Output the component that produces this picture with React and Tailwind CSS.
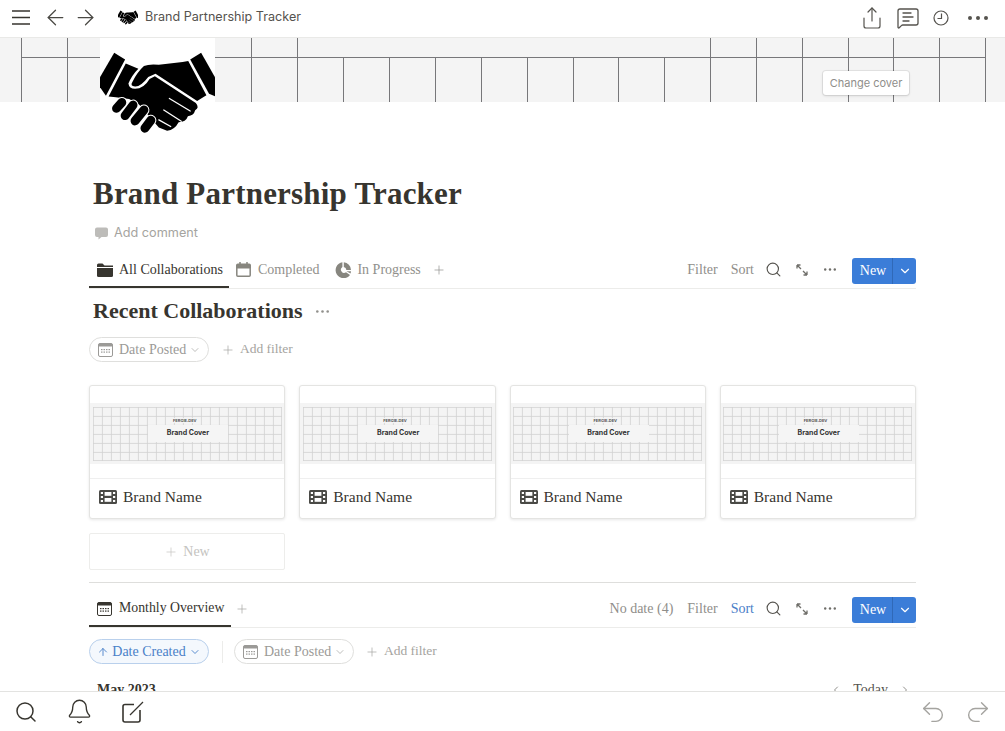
import React from "react";
import { ArrowLeft, ArrowRight, ChevronDown, ChevronLeft, ChevronRight, Plus, Search, Bell, Undo2, Redo2, ArrowUp, Share, MessageSquareText } from "lucide-react";

const serif = "font-['Liberation_Serif',serif]";

const Handshake = ({ className }) => (
  <svg viewBox="12 20 348 247" className={className}>
    <path d="M55 22 L88 42 L30 152 L12 126 L12 96 Z" fill="#000" />
    <path d="M318 22 L285 42 L342 146 L360 153 L360 96 Z" fill="#000" />
    <path d="M90 54 L128 70 Q108 90 98 115 Q100 131 118 131 Q145 130 162 101 L178 93 L302 174 Q314 188 300 196 Q296 212 278 214 Q272 232 250 232 Q238 255 215 258 L190 248 L130 178 L100 162 L60 156 L38 154 Z" fill="#000" />
    <path d="M110 110 Q125 80 145 62 Q160 55 190 58 L262 50 L279 47 L334 150 L306 168 L180 85 L158 95 Q135 125 118 124 Q102 122 110 110 Z" fill="#000" />
    <g stroke="#fff" strokeWidth="4" strokeLinecap="round">
      <path d="M222 160 L285 198" />
      <path d="M205 195 L258 229" />
      <path d="M190 225 L226 245" />
    </g>
    <g strokeLinecap="round" fill="none">
      <g stroke="#fff" strokeWidth="33">
        <path d="M62 190 L78 172" />
        <path d="M88 212 L112 180" />
        <path d="M118 228 L145 195" />
        <path d="M148 250 L166 226" />
      </g>
      <g stroke="#000" strokeWidth="27">
        <path d="M62 190 L78 172" />
        <path d="M88 212 L112 180" />
        <path d="M118 228 L145 195" />
        <path d="M148 250 L166 226" />
      </g>
    </g>
  </svg>
);

const Dots = ({ className }) => (
  <svg viewBox="0 0 20 4" className={className} fill="currentColor">
    <circle cx="2" cy="2" r="2" />
    <circle cx="10" cy="2" r="2" />
    <circle cx="18" cy="2" r="2" />
  </svg>
);

const Expand = ({ className }) => (
  <svg viewBox="0 0 14 14" className={className} fill="none" stroke="currentColor" strokeWidth="1.3">
    <path d="M2 2 L6 6 M2 2 V5.5 M2 2 H5.5 M12 12 L8 8 M12 12 V8.5 M12 12 H8.5" />
  </svg>
);

const Folder = () => (
  <svg viewBox="0 0 16 14" className="w-4 h-[14px]" fill="#37352f">
    <path d="M0 2 Q0 0.5 1.5 0.5 H5.5 L7.5 2.5 H16 V4 H0 Z" />
    <path d="M0 5 H16 V12.5 Q16 14 14.5 14 H1.5 Q0 14 0 12.5 Z" />
  </svg>
);

const CalendarFill = () => (
  <svg viewBox="0 0 15 15" className="w-[15px] h-[15px]" fill="none" stroke="#87867f">
    <rect x="0.8" y="2.2" width="13.4" height="12" rx="1" strokeWidth="1.5" />
    <path d="M0.8 3 H14.2 V6 H0.8 Z" fill="#87867f" />
    <path d="M4 0 V3 M11 0 V3" strokeWidth="1.5" />
  </svg>
);

const Pie = () => (
  <svg viewBox="0 0 16 16" className="w-4 h-4" fill="#87867f">
    <path d="M7.4 0.3 V5 A3.2 3.2 0 1 0 11 10.3 L15 13 A8 8 0 1 1 7.4 0.3 Z" />
    <path d="M8.8 0.3 A8 8 0 0 1 16 8 H11.4 A3.5 3.5 0 0 0 8.8 5 Z" />
    <path d="M11.5 9.2 H16 A8 8 0 0 1 15.5 11.6 Z" />
  </svg>
);

const CalendarSmall = ({ color = "#9b9a97", fill = "#fff" }) => (
  <svg viewBox="0 0 15 14" className="w-[15px] h-[14px] shrink-0">
    <rect x="0.5" y="0.5" width="14" height="13" rx="1.5" fill={fill} stroke={color} />
    <rect x="0.5" y="0.5" width="14" height="3" rx="1" fill={color} />
    <g fill={color}>
      <rect x="3" y="6" width="1.5" height="1.2" />
      <rect x="5.5" y="6" width="1.5" height="1.2" />
      <rect x="8" y="6" width="1.5" height="1.2" />
      <rect x="10.5" y="6" width="1.5" height="1.2" />
      <rect x="3" y="8.5" width="1.5" height="1.2" />
      <rect x="5.5" y="8.5" width="1.5" height="1.2" />
      <rect x="8" y="8.5" width="1.5" height="1.2" />
      <rect x="10.5" y="8.5" width="1.5" height="1.2" />
    </g>
  </svg>
);

const Film = () => (
  <svg viewBox="0 0 18 14" className="w-[18px] h-[14px] shrink-0">
    <rect width="18" height="14" rx="1.5" fill="#4a4a46" />
    <g fill="#fff">
      <rect x="1.8" y="2" width="2.2" height="2" />
      <rect x="1.8" y="6" width="2.2" height="2" />
      <rect x="1.8" y="10" width="2.2" height="2" />
      <rect x="14" y="2" width="2.2" height="2" />
      <rect x="14" y="6" width="2.2" height="2" />
      <rect x="14" y="10" width="2.2" height="2" />
      <rect x="5.6" y="2" width="6.8" height="3.8" />
      <rect x="5.6" y="8" width="6.8" height="3.8" />
    </g>
  </svg>
);

const CoverGrid = () => {
  const top = [21, 67, 251, 297, 710, 756, 802, 848, 893, 939, 985];
  const bottom = [21, 67, 251, 297, 343, 389, 435, 481, 527, 573, 618, 664, 710, 756, 802, 848, 893, 939, 985];
  return (
    <svg width="1005" height="64" className="block" stroke="#77777a" strokeWidth="1">
      {top.map((x) => (
        <line key={x} x1={x + 0.5} x2={x + 0.5} y1="0" y2="19" />
      ))}
      <line x1="21" x2="985" y1="19.5" y2="19.5" />
      {bottom.map((x) => (
        <line key={x} x1={x + 0.5} x2={x + 0.5} y1="19" y2="64" />
      ))}
    </svg>
  );
};

const ThumbGrid = () => {
  const cols = Array.from({ length: 22 }, (_, i) => i * 9);
  const rows = Array.from({ length: 7 }, (_, i) => i * 9);
  return (
    <svg viewBox="0 0 189 54" className="block w-[189px] h-[54px]" stroke="#d0d0d0" strokeWidth="0.8">
      {cols.map((x) => (
        <line key={x} x1={Math.min(x + 0.4, 188.6)} x2={Math.min(x + 0.4, 188.6)} y1="0" y2="54" />
      ))}
      {rows.map((y) => (
        <line key={y} y1={Math.min(y + 0.4, 53.6)} y2={Math.min(y + 0.4, 53.6)} x1="0" x2="189" />
      ))}
    </svg>
  );
};

const Card = () => (
  <div className="h-[134px] rounded-[3px] border border-[#e4e4e2] bg-white shadow-[0_1px_3px_rgba(15,15,15,0.1)] flex flex-col">
    <div className="h-[93px] shrink-0 pt-[17px] border-b border-[#efefef]">
      <div className="h-[61px] bg-[#f4f4f4] flex items-center justify-center relative">
        <ThumbGrid />
        <div className="absolute left-[58px] top-[22px] w-[80px] h-[17px] bg-[#f5f5f5] flex items-center justify-center font-['Inter',sans-serif] font-bold text-[7px] text-[#333]">
          Brand Cover
        </div>
        <div className="absolute left-[82px] top-[15px] px-px bg-[#f4f4f4] font-['Inter',sans-serif] font-bold text-[4px] leading-[5px] text-[#555]">
          FERGIE.DEV
        </div>
      </div>
    </div>
    <div className={`flex-1 flex items-center gap-[6px] pl-[9px] pb-[4px] text-[15.5px] text-[#37352f] ${serif}`}>
      <Film />
      <span>Brand Name</span>
    </div>
  </div>
);

const DbActions = ({ sortBlue, noDate }) => (
  <div className={`flex items-center text-[14px] text-[#8f8e8a] ${serif}`}>
    {noDate && <span className="mr-[14px]">No date (4)</span>}
    <span className="mr-[13px]">Filter</span>
    <span className={sortBlue ? "text-[#4a80c8]" : ""}>Sort</span>
    <Search className="w-[17px] h-[17px] ml-[11px] text-[#55534e]" strokeWidth={1.6} />
    <Expand className="w-[14px] h-[14px] ml-[13px] text-[#6f6e69]" />
    <Dots className="w-[12px] h-[3px] ml-[15px] text-[#6f6e69]" />
    <div className="ml-[16px] mt-[2px] w-[64px] h-[26px] rounded-[3px] bg-[#3b7dd8] flex text-white">
      <span className="w-[41px] pl-[2px] flex items-center justify-center border-r border-[#3069b8]">New</span>
      <span className="flex-1 flex items-center justify-center">
        <ChevronDown className="w-[14px] h-[14px]" strokeWidth={2} />
      </span>
    </div>
  </div>
);

const AddFilter = () => (
  <div className={`flex items-center gap-[5px] text-[13.5px] text-[#a5a4a0] ${serif}`}>
    <Plus className="w-[14px] h-[14px]" strokeWidth={1.2} />
    <span>Add filter</span>
  </div>
);

const DatePosted = () => (
  <div className={`h-[25px] w-[120px] pl-[8px] rounded-full border border-[#dfdfdd] flex items-center gap-[6px] text-[14px] text-[#9b9a97] whitespace-nowrap ${serif}`}>
    <CalendarSmall />
    <span className="flex items-center gap-[3px]">
      Date Posted
      <ChevronDown className="w-[12px] h-[12px]" strokeWidth={1.3} />
    </span>
  </div>
);

export default function App() {
  return (
    <div className="h-screen flex flex-col bg-white overflow-hidden text-[#37352f]">
      <header className="h-[38px] shrink-0 flex items-center pl-3 pr-[17px] pb-[2px] border-b border-[#e9e9e7]">
        <svg viewBox="0 0 18 15" className="w-[18px] h-[15px] text-[#37352f]" stroke="currentColor" strokeWidth="1.7">
          <path d="M0 1 H18 M0 7.5 H18 M0 14 H18" />
        </svg>
        <ArrowLeft className="w-[25px] h-[25px] ml-[13px] text-[#4a4944]" strokeWidth={1.2} />
        <ArrowRight className="w-[25px] h-[25px] ml-[5px] text-[#4a4944]" strokeWidth={1.2} />
        <Handshake className="w-[20px] h-[15px] ml-[20px]" />
        <span className="ml-[7px] font-['Inter',sans-serif] text-[12.6px] text-[#55534e]">Brand Partnership Tracker</span>
        <div className="ml-auto flex items-center text-[#55534e]">
          <Share className="w-[24px] h-[24px]" strokeWidth={1.2} />
          <MessageSquareText className="w-[24px] h-[24px] ml-[12px]" strokeWidth={1.3} />
          <svg viewBox="0 0 16 16" className="w-[16px] h-[16px] ml-[13px]" fill="none" stroke="currentColor" strokeWidth="1.2">
            <circle cx="8" cy="8" r="7" />
            <path d="M8.5 3.5 V8.5 H4.5" />
          </svg>
          <Dots className="w-[20px] h-[4px] ml-[19px]" />
        </div>
      </header>

      <main className="flex-1 min-h-0 overflow-hidden">
        <div className="relative h-[64px] bg-[#f4f4f4]">
          <CoverGrid />
          <div className="absolute left-[100px] top-0 w-[115px] h-[64px] bg-white" />
          <Handshake className="absolute left-[100px] top-[14px] w-[115px] h-[82px]" />
          <div className="absolute left-[823px] top-[33px] w-[86px] h-[24px] rounded-[3px] bg-white shadow-[0_0_0_1px_rgba(15,15,15,0.07),0_1px_3px_rgba(15,15,15,0.12)] flex items-center justify-center font-['Inter',sans-serif] text-[11px] text-[#8f8e8a]">
            Change cover
          </div>
        </div>

        <div className="px-[89px]">
          <h1 className={`mt-[72px] pl-1 text-[31px] leading-[40px] font-bold tracking-[0.2px] text-[#37352f] whitespace-nowrap ${serif}`}>
            Brand Partnership Tracker
          </h1>
          <div className="mt-[9px] pl-[6px] h-[20px] flex items-center gap-[6px] font-['Inter',sans-serif] text-[12.7px] text-[#a5a4a0]">
            <svg viewBox="0 0 13 13" className="w-[13px] h-[13px]" fill="#bdbcb9">
              <path d="M2 0.5 H11 Q13 0.5 13 2.5 V8 Q13 10 11 10 H6.5 L3.5 12.5 V10 H2 Q0 10 0 8 V2.5 Q0 0.5 2 0.5 Z" />
            </svg>
            Add comment
          </div>

          <div className="mt-[8px] h-[38px] flex items-center justify-between border-b border-[#ececea]">
            <div className={`flex items-center text-[14px] text-[#91908c] ${serif}`}>
              <div className="w-[140px] h-[37px] pl-[8px] pt-[2px] flex items-center gap-[6px] text-[#37352f] border-b-2 border-[#37352f] box-border whitespace-nowrap">
                <Folder />
                All Collaborations
              </div>
              <div className="ml-[7px] flex items-center gap-[7px]">
                <CalendarFill />
                Completed
              </div>
              <div className="ml-[16px] flex items-center gap-[6px]">
                <Pie />
                In Progress
              </div>
              <Plus className="w-[14px] h-[14px] ml-[11px]" strokeWidth={1.2} />
            </div>
            <DbActions />
          </div>

          <div className="mt-[8px] pl-1 h-[28px] flex items-center">
            <h2 className={`text-[22px] leading-[28px] font-bold ${serif}`}>Recent Collaborations</h2>
            <Dots className="w-[13px] h-[3px] ml-[13px] text-[#91908c]" />
          </div>

          <div className="mt-[12px] flex items-center gap-[12px]">
            <DatePosted />
            <AddFilter />
          </div>

          <div className="mt-[23px] grid grid-cols-4 gap-[14px]">
            <Card />
            <Card />
            <Card />
            <Card />
          </div>

          <div className={`mt-[14px] w-[196px] h-[37px] rounded-[2px] border border-[#ededeb] flex items-center justify-center gap-[5px] text-[14px] text-[#c4c3c0] ${serif}`}>
            <Plus className="w-[14px] h-[14px]" strokeWidth={1.2} />
            New
          </div>

          <div className="mt-[12px] border-t border-[#dededc]" />

          <div className="mt-[7px] h-[38px] flex items-center justify-between border-b border-[#ececea]">
            <div className={`flex items-center text-[13.8px] ${serif}`}>
              <div className="w-[142px] h-[37px] pl-[8px] pt-[2px] flex items-center gap-[7px] text-[#37352f] border-b-2 border-[#37352f] box-border whitespace-nowrap">
                <CalendarSmall color="#37352f" />
                Monthly Overview
              </div>
              <Plus className="w-[14px] h-[14px] ml-[4px] text-[#a5a4a0]" strokeWidth={1.2} />
            </div>
            <DbActions sortBlue noDate />
          </div>

          <div className="mt-[11px] flex items-center">
            <div className={`h-[25px] w-[120px] rounded-full border border-[#b9d0ec] bg-[#f4f8fd] flex items-center justify-center gap-[3px] text-[14px] text-[#4a80c8] whitespace-nowrap ${serif}`}>
              <ArrowUp className="w-[12px] h-[12px]" strokeWidth={1.8} />
              Date Created
              <ChevronDown className="w-[12px] h-[12px]" strokeWidth={1.8} />
            </div>
            <div className="w-px h-[22px] bg-[#ececea] ml-[13px] mr-[11px]" />
            <DatePosted />
            <div className="ml-[11px]">
              <AddFilter />
            </div>
          </div>

          <div className={`mt-[16px] flex items-center justify-between text-[14px] leading-[20px] ${serif}`}>
            <span className="pl-2 font-bold">May 2023</span>
            <span className="flex items-center gap-[11px] pr-[5px] text-[#55534e]">
              <ChevronLeft className="w-[12px] h-[12px]" strokeWidth={1.3} />
              Today
              <ChevronRight className="w-[12px] h-[12px]" strokeWidth={1.3} />
            </span>
          </div>
        </div>
      </main>

      <footer className="h-[40px] shrink-0 border-t border-[#e3e3e1] bg-white flex items-center pl-[14px] pr-[13px]">
        <Search className="w-[24px] h-[24px] text-[#37352f]" strokeWidth={1.5} />
        <Bell className="w-[27px] h-[27px] ml-[28px] text-[#37352f]" strokeWidth={1.2} />
        <svg viewBox="0 0 22 22" className="w-[22px] h-[22px] ml-[29px] text-[#37352f]" fill="none" stroke="currentColor" strokeWidth="1.6">
          <path d="M12 3.5 H3 Q1 3.5 1 5.5 V19 Q1 21 3 21 H16 Q18 21 18 19 V9" />
          <path d="M8 14 L21 1" strokeWidth="1.3" />
        </svg>
        <Undo2 className="w-[28px] h-[28px] ml-auto text-[#a5a4a0]" strokeWidth={1.2} />
        <Redo2 className="w-[28px] h-[28px] ml-[17px] text-[#a5a4a0]" strokeWidth={1.2} />
      </footer>
    </div>
  );
}
